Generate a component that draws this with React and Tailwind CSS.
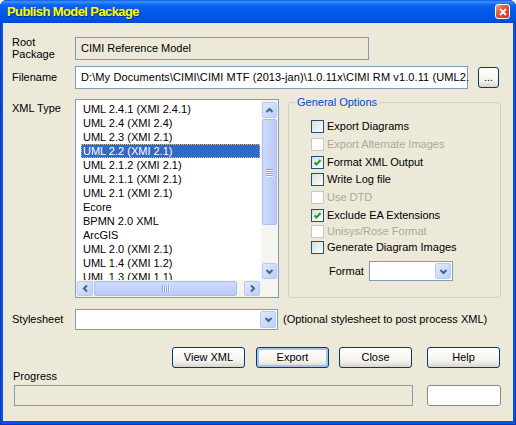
const ITEMS = [
  'UML 2.4.1 (XMI 2.4.1)',
  'UML 2.4 (XMI 2.4)',
  'UML 2.3 (XMI 2.1)',
  'UML 2.2 (XMI 2.1)',
  'UML 2.1.2 (XMI 2.1)',
  'UML 2.1.1 (XMI 2.1)',
  'UML 2.1 (XMI 2.1)',
  'Ecore',
  'BPMN 2.0 XML',
  'ArcGIS',
  'UML 2.0 (XMI 2.1)',
  'UML 1.4 (XMI 1.2)',
  'UML 1.3 (XMI 1.1)',
];

const OPTIONS = [
  { label: 'Export Diagrams', mt: 'mt-[11px]' },
  { label: 'Export Alternate Images', disabled: true, mt: 'mt-[5px]' },
  { label: 'Format XML Output', checked: true, mt: 'mt-[5px]' },
  { label: 'Write Log file', mt: 'mt-[4px]' },
  { label: 'Use DTD', disabled: true, mt: 'mt-[5px]' },
  { label: 'Exclude EA Extensions', checked: true, mt: 'mt-[5px]' },
  { label: 'Unisys/Rose Format', disabled: true, mt: 'mt-[3px]' },
  { label: 'Generate Diagram Images', mt: 'mt-[3px]' },
];

function Chev({ dir }) {
  const d = {
    up: 'M1.5 6 L4.5 3 L7.5 6',
    down: 'M1.5 3 L4.5 6 L7.5 3',
    left: 'M6 1.5 L3 4.5 L6 7.5',
    right: 'M3 1.5 L6 4.5 L3 7.5',
  }[dir];
  return (
    <svg width="9" height="9" viewBox="0 0 9 9">
      <path d={d} fill="none" stroke="#4d6185" strokeWidth="2" />
    </svg>
  );
}

function ScrollBtn({ dir, className = '' }) {
  return (
    <div
      className={`flex items-center justify-center rounded-[2px] border border-[#b7caf5] bg-[linear-gradient(135deg,#e0e9fe,#bccffa)] ${className}`}
    >
      <Chev dir={dir} />
    </div>
  );
}

function Check({ label, checked, disabled, mt }) {
  return (
    <div className={`flex items-center h-[13px] ${mt}`}>
      <div
        className={`w-[13px] h-[13px] border flex items-center justify-center ${
          disabled
            ? 'border-[#cac8bb] bg-white'
            : 'border-[#1c5180] bg-[linear-gradient(135deg,#dcdcd7,#ffffff)]'
        }`}
      >
        {checked && (
          <svg width="9" height="9" viewBox="0 0 9 9">
            <path d="M1.5 4.5 L3.5 6.5 L7.5 2" fill="none" stroke="#21a121" strokeWidth="2" />
          </svg>
        )}
      </div>
      <span className={`ml-[3px] whitespace-nowrap ${disabled ? 'text-[#aca899]' : ''}`}>{label}</span>
    </div>
  );
}

function Combo({ className = '' }) {
  return (
    <div className={`border border-[#7f9db9] bg-white flex justify-end p-[1px] ${className}`}>
      <ScrollBtn dir="down" className="w-[16px] h-full" />
    </div>
  );
}

function XpButton({ children, def, className = '' }) {
  return (
    <div
      className={`w-[73px] h-[21px] rounded-[3px] border border-[#003c74] bg-[linear-gradient(#ffffff,#f3f2ec_70%,#d9d4c8)] flex items-center justify-center ${
        def ? 'shadow-[inset_0_0_0_2px_#a8c1f4]' : ''
      } ${className}`}
    >
      {children}
    </div>
  );
}

export default function App() {
  return (
    <div className="w-[516px] h-[425px] bg-white [font-family:Liberation_Sans,Arial,sans-serif] text-[11px] leading-[13px] text-black">
      <div className="w-full h-full flex flex-col rounded-t-[7px] overflow-hidden bg-[#0654e2] shadow-[inset_0_0_0_1px_#0a35c0]">
        {/* title bar */}
        <div className="h-[23px] shrink-0 flex items-center justify-between pl-[7px] pr-[5px] bg-[linear-gradient(180deg,#0a5fe8_0%,#3d8ffb_8%,#0b63ef_22%,#0058e7_60%,#0053e0_85%,#0448cf_100%)]">
          <span className="text-[13px] font-bold tracking-[-0.6px] text-[#ffff00] [text-shadow:1px_1px_0_#0a2a9a]">
            Publish Model Package
          </span>
          <div className="w-[15px] h-[15px] mr-[1px] rounded-[3px] border border-white bg-[linear-gradient(135deg,#f2a184,#e4582e_40%,#c8391a)] flex items-center justify-center">
            <svg width="8" height="8" viewBox="0 0 8 8">
              <path d="M1 1 L7 7 M7 1 L1 7" stroke="#fff" strokeWidth="1.8" />
            </svg>
          </div>
        </div>

        {/* body */}
        <div className="flex-1 mx-[3px] mb-[4px] bg-[#ece9d8] pl-[9px] pt-[14px]">
          <div className="flex h-[23px]">
            <div className="w-[63px] leading-[12px] -mt-[1px]">
              Root
              <br />
              Package
            </div>
            <div className="w-[294px] h-[23px] border border-[#7f9db9] bg-[#ece9d8] px-[5px] flex items-center">
              CIMI Reference Model
            </div>
          </div>

          <div className="flex items-center h-[23px] mt-[6px]">
            <div className="w-[63px]">Filename</div>
            <div className="w-[393px] h-[23px] border border-[#7f9db9] bg-white px-[5px] flex items-center whitespace-nowrap tracking-[0.1px]">
              {'D:\\My Documents\\CIMI\\CIMI MTF (2013-jan)\\1.0.11x\\CIMI RM v1.0.11 (UML2.'}
            </div>
            <XpButton className="!w-[21px] ml-[10px]">...</XpButton>
          </div>

          <div className="flex items-start mt-[10px]">
            <div className="w-[63px] pt-[3px]">XML Type</div>

            <div className="w-[204px] h-[199px] border border-[#7f9db9] bg-white flex flex-col">
              <div className="flex flex-1 min-h-0">
                <div className="flex-1 overflow-hidden pt-[2px] pl-[5px] pr-[1px]">
                  {ITEMS.map((it, i) => (
                    <div
                      key={it}
                      className={`h-[14px] leading-[14px] px-[2px] whitespace-nowrap ${
                        i === 3
                          ? 'bg-[#316ac5] text-white outline-1 outline-dotted outline-[#e8b860] -outline-offset-1'
                          : ''
                      }`}
                    >
                      {it}
                    </div>
                  ))}
                </div>
                <div className="w-[17px] flex flex-col px-[1px] pt-[2px] pb-[1px] bg-[#f5f4ef]">
                  <ScrollBtn dir="up" className="h-[16px]" />
                  <div className="h-[106px] mt-[1px] rounded-[2px] border border-[#a9bff2] bg-[linear-gradient(90deg,#cddbfd,#b9cbf7)] flex items-center justify-center">
                    <div className="flex flex-col gap-[1px]">
                      {[0, 1, 2, 3].map((i) => (
                        <div key={i} className="w-[7px] h-[1px] bg-[#8ca4e6] shadow-[0_1px_0_#eef3ff]" />
                      ))}
                    </div>
                  </div>
                  <div className="flex-1" />
                  <ScrollBtn dir="down" className="h-[16px]" />
                </div>
              </div>
              <div className="h-[17px] flex bg-[#f5f4ef]">
                <div className="flex-1 flex py-[1px] pl-[1px] pr-[1px]">
                  <ScrollBtn dir="left" className="w-[16px]" />
                  <div className="w-[143px] ml-[1px] rounded-[2px] border border-[#a9bff2] bg-[linear-gradient(180deg,#cddbfd,#b9cbf7)] flex items-center justify-center">
                    <div className="flex gap-[1px]">
                      {[0, 1, 2, 3].map((i) => (
                        <div key={i} className="w-[1px] h-[7px] bg-[#8ca4e6] shadow-[1px_0_0_#eef3ff]" />
                      ))}
                    </div>
                  </div>
                  <div className="flex-1" />
                  <ScrollBtn dir="right" className="w-[16px]" />
                </div>
                <div className="w-[17px] bg-[#f5f4ef]" />
              </div>
            </div>

            <fieldset className="ml-[9px] -mt-[3px] w-[213px] h-[202px] border border-[#d0d0bf] rounded-[3px] pl-[22px]">
              <legend className="ml-[-16px] px-[2px] text-[#0046d5] leading-[13px]">General Options</legend>
              {OPTIONS.map((o) => (
                <Check key={o.label} {...o} />
              ))}
              <div className="flex items-center h-[20px] mt-[7px] pl-[18px]">
                <div className="w-[40px]">Format</div>
                <Combo className="w-[84px] h-[20px]" />
              </div>
            </fieldset>
          </div>

          <div className="flex items-center h-[21px] mt-[11px]">
            <div className="w-[63px]">Stylesheet</div>
            <Combo className="w-[203px] h-[21px]" />
            <span className="ml-[5px] whitespace-nowrap">(Optional stylesheet to post process XML)</span>
          </div>

          <div className="flex h-[21px] mt-[17px] pl-[160px]">
            <XpButton>View XML</XpButton>
            <XpButton def className="ml-[11px]">Export</XpButton>
            <XpButton className="ml-[10px]">Close</XpButton>
            <XpButton className="ml-[15px]">Help</XpButton>
          </div>

          <div className="mt-[2px] ml-[1px]">Progress</div>

          <div className="flex mt-[2px] ml-[2px]">
            <div className="w-[399px] h-[21px] border border-[#7f9db9] bg-[#ece9d8]" />
            <div className="w-[74px] h-[21px] ml-[14px] border border-[#8a8a8a] rounded-[3px] bg-white" />
          </div>
        </div>
      </div>
    </div>
  );
}
